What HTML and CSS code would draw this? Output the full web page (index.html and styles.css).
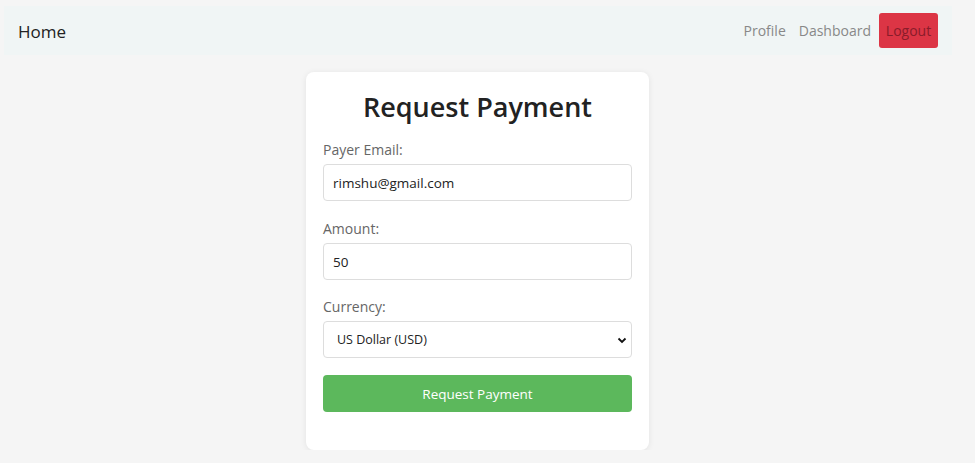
FILE: index.html
```html
<!DOCTYPE html>
<html>
<head>
<meta charset="utf-8">
<link rel="stylesheet" href="styles.css">
</head>
<body>
<nav class="navbar">
  <a class="brand" href="#">Home</a>
  <div class="nav-links">
    <a class="nav-link" href="#">Profile</a>
    <a class="nav-link" href="#">Dashboard</a>
    <button class="logout">Logout</button>
  </div>
</nav>
<main class="page">
  <div class="card">
    <h1 class="title">Request Payment</h1>
    <form class="form">
      <label class="field">
        <span class="label">Payer Email:</span>
        <input class="control" type="email" value="rimshu@gmail.com">
      </label>
      <label class="field">
        <span class="label">Amount:</span>
        <input class="control" type="text" value="50">
      </label>
      <label class="field">
        <span class="label">Currency:</span>
        <span class="select-wrap">
          <select class="control select">
            <option>US Dollar (USD)</option>
          </select>
          <svg class="chev" width="10" height="7" viewBox="0 0 10 7"><path d="M1.5 1.5 L5 5 L8.5 1.5" fill="none" stroke="#111" stroke-width="1.8"/></svg>
        </span>
      </label>
      <button class="submit" type="button">Request Payment</button>
    </form>
  </div>
</main>
</body>
</html>
```
FILE: styles.css
```css
* { box-sizing: border-box; }
html, body { margin: 0; }
body {
  background: #f5f5f5;
  font-family: "Open Sans", "Noto Sans", sans-serif;
  color: #222;
  padding: 6px 23px 0 4px;
}
.navbar {
  height: 49px;
  background: #f0f5f5;
  display: flex;
  align-items: center;
  justify-content: space-between;
  padding: 0 13px 0 14px;
}
.brand {
  font-size: 17px;
  color: #222;
  text-decoration: none;
  margin-top: 1px;
}
.nav-links {
  display: flex;
  align-items: center;
}
.nav-link {
  font-size: 14px;
  color: #888;
  text-decoration: none;
  margin-right: 14px;
}
.nav-link:first-child { margin-left: 2px; margin-right: 13px; }
.nav-link:nth-child(2) { margin-right: 8px; }
.logout {
  font-family: inherit;
  font-size: 14px;
  background: #dc3545;
  color: #8a1c2a;
  border: none;
  border-radius: 3px;
  height: 35px;
  width: 59px;
  padding: 0;
  margin-top: -1px;
  margin-right: 1px;
}
.page {
  display: flex;
  justify-content: center;
  padding-top: 17px;
  padding-right: 1px;
}
.card {
  width: 343px;
  background: #fff;
  border-radius: 8px;
  box-shadow: 0 1px 6px rgba(0,0,0,0.08);
  padding: 16px 17px 38px;
}
.title {
  margin: 0 0 13px;
  text-align: center;
  font-size: 27px;
  font-weight: 600;
  color: #222;
  line-height: 38px;
}
.form { display: flex; flex-direction: column; }
.field {
  display: flex;
  flex-direction: column;
  margin-bottom: 16px;
}
.label {
  font-size: 14px;
  color: #666;
  line-height: 20px;
  padding-top: 1px;
  margin-bottom: 4px;
}
.field:nth-child(2) .label { padding-top: 2px; }
.control {
  height: 37px;
  width: 100%;
  border: 1px solid #ddd;
  border-radius: 4px;
  padding: 0 9px;
  font-family: inherit;
  font-size: 13.5px;
  color: #222;
  background: #fff;
}
.select-wrap { position: relative; display: block; }
.select {
  appearance: none;
  -webkit-appearance: none;
  padding-left: 13px;
  font-size: 12.5px;
}
.chev { position: absolute; right: 5px; top: 16px; pointer-events: none; }
.submit {
  margin-top: 1px;
  height: 37px;
  border: none;
  border-radius: 4px;
  background: #5cb85c;
  color: #fff;
  font-family: inherit;
  font-size: 13.5px;
}
```
